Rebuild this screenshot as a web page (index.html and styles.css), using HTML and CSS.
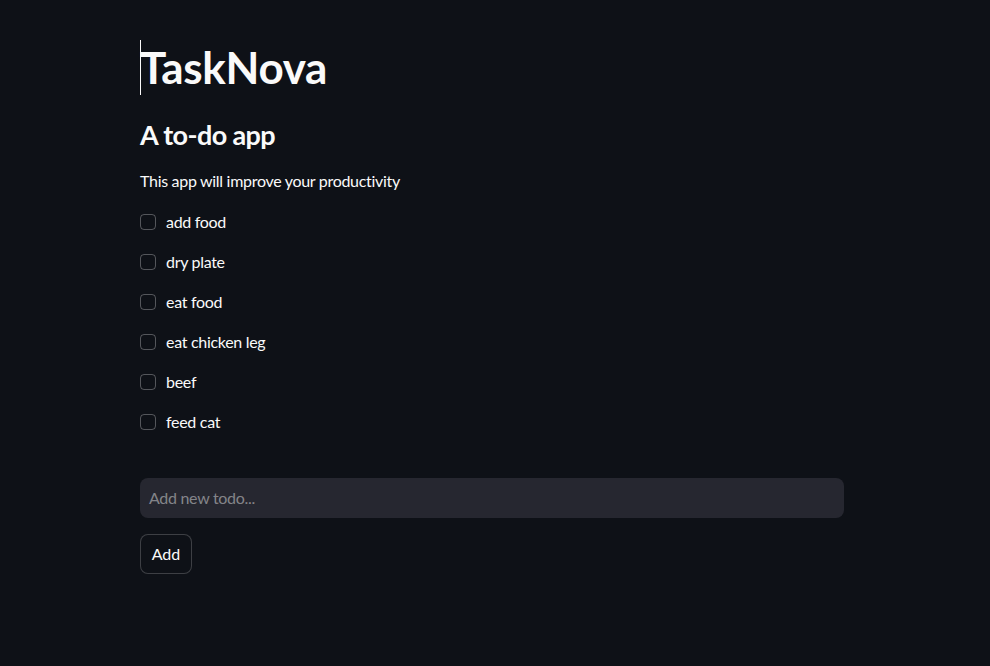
FILE: index.html
```html
<!DOCTYPE html>
<html>
<head>
<meta charset="utf-8">
<link rel="stylesheet" href="styles.css">
</head>
<body>
<main class="main">
  <h1 class="title">TaskNova</h1>
  <h2 class="subtitle">A to-do app</h2>
  <p class="desc">This app will improve your productivity</p>
  <ul class="todos">
    <li class="todo"><span class="box"></span><span class="label">add food</span></li>
    <li class="todo"><span class="box"></span><span class="label">dry plate</span></li>
    <li class="todo"><span class="box"></span><span class="label">eat food</span></li>
    <li class="todo"><span class="box"></span><span class="label">eat chicken leg</span></li>
    <li class="todo"><span class="box"></span><span class="label">beef</span></li>
    <li class="todo"><span class="box"></span><span class="label">feed cat</span></li>
  </ul>
  <div class="input">Add new todo...</div>
  <button class="btn">Add</button>
</main>
</body>
</html>
```
FILE: styles.css
```css
html, body {
  margin: 0;
  background: #0e1117;
  color: #fafafa;
  font-family: Lato, "Noto Sans", sans-serif;
}
.main {
  padding: 40px 0 0 140px;
  width: 704px;
  display: flex;
  flex-direction: column;
}
.title {
  position: relative;
  margin: 0;
  font-size: 44px;
  line-height: 55px;
  font-weight: 700;
  letter-spacing: -0.3px;
}
.title::before {
  content: "";
  position: absolute;
  left: 0;
  top: 0;
  width: 1px;
  height: 55px;
  background: #fafafa;
}
.subtitle {
  margin: 23px 0 0;
  font-size: 27px;
  line-height: 34px;
  font-weight: 700;
  letter-spacing: -0.6px;
}
.desc {
  margin: 16px 0 0;
  font-size: 16px;
  line-height: 26px;
  letter-spacing: -0.3px;
}
.todos {
  list-style: none;
  margin: 8px 0 0;
  padding: 0;
}
.todo {
  height: 40px;
  display: flex;
  align-items: center;
  font-size: 16px;
  letter-spacing: -0.3px;
}
.label {
  position: relative;
  top: -1px;
}
.box {
  width: 16px;
  height: 16px;
  box-sizing: border-box;
  border: 1px solid rgba(250, 250, 250, 0.3);
  border-radius: 4px;
  margin-right: 10px;
}
.input {
  margin-top: 36px;
  height: 40px;
  box-sizing: border-box;
  background: #262730;
  border-radius: 8px;
  padding: 0 9px 1px;
  display: flex;
  align-items: center;
  font-size: 16px;
  letter-spacing: -0.3px;
  color: rgba(250, 250, 250, 0.45);
}
.btn {
  margin-top: 16px;
  align-self: flex-start;
  height: 40px;
  width: 52px;
  padding: 0 0 1px;
  background: #0e1117;
  color: #fafafa;
  border: 1px solid rgba(250, 250, 250, 0.2);
  border-radius: 8px;
  font-family: inherit;
  font-size: 16px;
}
```
